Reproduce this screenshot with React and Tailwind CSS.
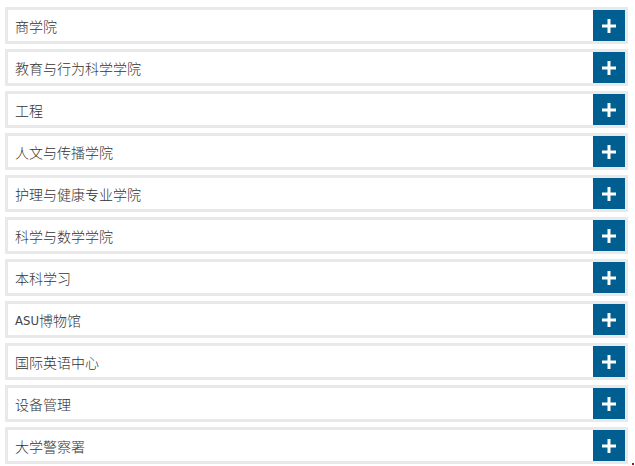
import React from "react";

const items = [
  "商学院",
  "教育与行为科学学院",
  "工程",
  "人文与传播学院",
  "护理与健康专业学院",
  "科学与数学学院",
  "本科学习",
  "ASU博物馆",
  "国际英语中心",
  "设备管理",
  "大学警察署",
];

const Plus = () => (
  <svg width="14" height="14" viewBox="0 0 14 14">
    <rect x="5.5" y="0" width="3" height="14" fill="#fff" />
    <rect x="0" y="5.5" width="14" height="3" fill="#fff" />
  </svg>
);

const Label = ({ name }) => {
  if (name.startsWith("ASU")) {
    return (
      <>
        <span style={{ fontFamily: '"DejaVu Sans Condensed", "Liberation Sans Narrow", sans-serif' }} className="text-[13px] text-[#444]">
          ASU
        </span>
        {name.slice(3)}
      </>
    );
  }
  return name;
};

export default function App() {
  return (
    <div className="relative w-[635px] h-[466px] bg-white overflow-hidden">
      <div className="flex flex-col gap-[5px] pt-[7px] pl-[5px] w-[628px]">
        {items.map((name, i) => (
          <div
            key={i}
            className="flex items-stretch justify-between h-[37px] border-[3px] border-[#e9e9e9] bg-white"
          >
            <span
              className="flex items-center pl-[7px] pt-[2px] text-[14px] font-light text-[#333]"
              style={{ fontFamily: '"Noto Sans CJK SC", sans-serif' }}
            >
              <Label name={name} />
            </span>
            <div className="flex items-center justify-center w-[32px] bg-[#005e90]">
              <Plus />
            </div>
          </div>
        ))}
      </div>
      <div className="absolute left-[632px] top-[463px] w-[2px] h-[2px] bg-[#d00000]" />
    </div>
  );
}
